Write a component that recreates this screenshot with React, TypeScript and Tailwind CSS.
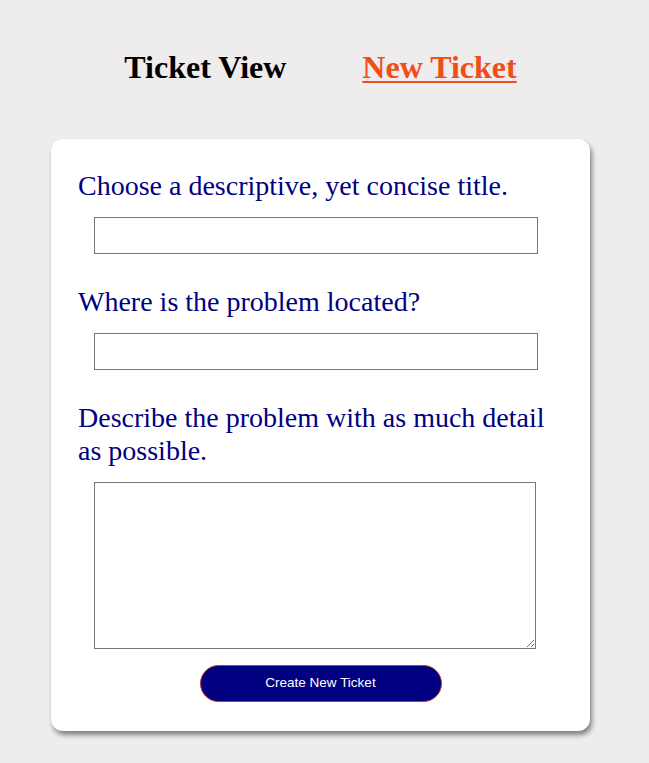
import React from "react";

const Field: React.FC<{ label: string; children: React.ReactNode; first?: boolean }> = (props) => {
  return (
    <div className={props.first ? "flex flex-col" : "flex flex-col mt-[31px]"}>
      <label className="text-[28px] leading-[33px] text-[#000080]">{props.label}</label>
      <div className="mt-[15px] pl-[16px]">{props.children}</div>
    </div>
  );
};

const App: React.FC = () => {
  const [ticket, setTicket] = React.useState({ title: "", location: "", details: "" });

  const handleChange = (e: React.ChangeEvent<HTMLInputElement | HTMLTextAreaElement>) => {
    const { name, value } = e.target;
    setTicket((prev) => ({ ...prev, [name]: value }));
  };

  return (
    <div className="min-h-screen w-full bg-[#eeeced] font-['Liberation_Serif','Times_New_Roman',serif] pt-[46px]">
      <nav className="flex flex-row justify-center gap-[76px] pr-[8px] text-[32px] font-bold leading-[42px]">
        <span className="text-black">Ticket View</span>
        <a href="#" className="text-[#f04e16] underline decoration-2 underline-offset-[3px]">
          New Ticket
        </a>
      </nav>

      <form
        onSubmit={(e) => e.preventDefault()}
        className="ml-[51px] mt-[51px] w-[539px] bg-white rounded-[12px] shadow-[2px_4px_5px_rgba(0,0,0,0.45)] px-[27px] pt-[30px] pb-[29px] flex flex-col"
      >
        <Field label="Choose a descriptive, yet concise title." first>
          <input
            name="title"
            value={ticket.title}
            onChange={handleChange}
            className="block w-[444px] h-[37px] border border-[#767676] bg-white outline-none"
          />
        </Field>
        <Field label="Where is the problem located?">
          <input
            name="location"
            value={ticket.location}
            onChange={handleChange}
            className="block w-[444px] h-[37px] border border-[#767676] bg-white outline-none"
          />
        </Field>
        <Field label="Describe the problem with as much detail as possible.">
          <textarea
            name="details"
            value={ticket.details}
            onChange={handleChange}
            className="block w-[442px] h-[167px] border border-[#767676] bg-white outline-none"
          />
        </Field>

        <button className="self-center mt-[16px] w-[242px] h-[37px] rounded-full bg-[#000080] border border-[#c0392b] text-white text-[13.5px] font-['Liberation_Sans',Arial,sans-serif]">
          Create New Ticket
        </button>
      </form>
    </div>
  );
};

export default App;
